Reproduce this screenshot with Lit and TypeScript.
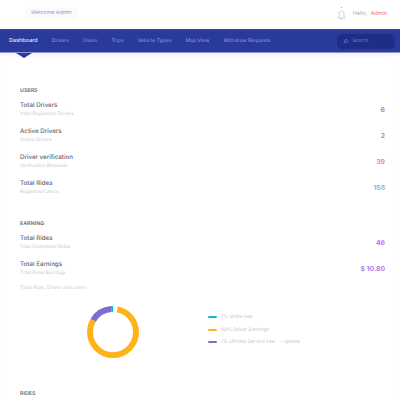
import { LitElement, html, css, svg } from "lit";
import { customElement } from "lit/decorators.js";

const users = [
  ["Total Drivers", "Valid Registered Drivers", "6", "purple"],
  ["Active Drivers", "Online Drivers", "2", "purple"],
  ["Driver verification", "Verification Requests", "39", "red"],
  ["Total Rides", "Registered Users", "155", "blue"],
];
const earning = [
  ["Total Rides", "Total Completed Rides", "46", "purple"],
  ["Total Earnings", "Total Rides Earnings", "$ 10.80", "purple"],
];
const nav = ["Drivers", "Users", "Trips", "Vehicle Types", "Map View", "Withdraw Requests"];
const legend = [
  ["1% Stripe Fee", "#12b5e5", ""],
  ["98% Driver Earnings", "#ffb31a", ""],
  ["1% Ufrides Service Fee", "#7a6fd0", "Update"],
];

@customElement("app-root")
export class AppRoot extends LitElement {
  static styles = css`
    :host { display: block; width: 400px; height: 400px; overflow: hidden; background: #fff; text-rendering: geometricPrecision;
      font-family: Inter, "Liberation Sans", sans-serif; color: #4a4a55; }
    .top { height: 29px; display: flex; align-items: flex-start; justify-content: space-between; box-sizing: border-box; padding: 7px 13px 0 25px; }
    .welcome { font-size: 5.3px; line-height: 7px; color: #9b9ba4; background: #fafaff; padding: 3px 6px; border-radius: 3px; }
    .hello { display: flex; align-items: center; gap: 7px; font-size: 5.4px; color: #a8a8b0; }
    .hello b { font-weight: 400; color: #ef6d80; margin-left: 2px; }
    .nav { height: 24px; background: #2a3a9b; border-top: 1px solid #3a49a8; border-bottom: 1px solid #8a92c8; box-sizing: border-box;
      display: flex; align-items: center; padding: 0 5px 0 9px; font-size: 5.15px; color: #8f9fe0; position: relative; box-shadow: 0 2px 4px #f0f0f6; }
    .nav span { margin-right: 14px; }
    .nav .active { color: #dfe4fa; font-weight: 500; font-size: 5.5px; position: relative; margin-right: 14px; }
    .nav .active::after { content: ""; position: absolute; left: 7px; top: 15px; border: 8px solid transparent; border-top: 5px solid #2a3a9b; border-bottom: 0; }
    .search { margin-left: auto; width: 58px; height: 15px; background: #1f2d86; border-radius: 5px; display: flex; align-items: center; gap: 4px; padding-left: 6px; box-sizing: border-box; color: #6f7cc4; font-size: 4.8px; }
    .content { margin: 4px 6px 0 6px; padding: 31px 9px 0 14px; background: #fff; box-shadow: 0 0 4px #fbfafe; height: 343px; box-sizing: border-box; }
    h3 { margin: 0 0 7px; font-size: 5.2px; line-height: 7px; font-weight: 600; color: #666670; letter-spacing: .1px; }
    .row { display: flex; justify-content: space-between; align-items: flex-start; height: 26px; }
    .name { font-size: 6.2px; line-height: 8px; font-weight: 500; color: #66666f; }
    .sub { font-size: 4.75px; line-height: 8px; color: #cacad0; }
    .val { font-size: 6.8px; font-weight: 700; line-height: 8px; margin-top: 3.5px; }
    .purple { color: #b47aec; } .red { color: #f0869b; } .blue { color: #7ab8f2; }
    .earn { margin-top: 15px; }
    .caption { font-size: 5.1px; line-height: 8px; color: #cccdd3; margin-top: -3px; }
    .chart { display: flex; align-items: flex-start; height: 99px; padding-left: 63px; padding-top: 10px; box-sizing: border-box; }
    .legend { margin-left: 65px; padding-top: 12px; display: flex; flex-direction: column; gap: 6.5px; font-size: 4.9px; color: #c6c6ce; }
    .legend div { display: flex; align-items: center; height: 6px; }
    .legend i { width: 9px; height: 2px; margin-right: 4px; border-radius: 1px; }
    .legend em { font-style: normal; margin-left: 5px; }
  `;

  private row(r: string[]) {
    return html`<div class="row"><div><div class="name">${r[0]}</div><div class="sub">${r[1]}</div></div><div class="val ${r[3]}">${r[2]}</div></div>`;
  }

  render() {
    const R = 23;
    const C = 2 * Math.PI * R;
    const seg = (c: string, start: number, pct: number) =>
      svg`<circle cx="30" cy="30" r=${R} fill="none" stroke=${c} stroke-width="6"
        stroke-dasharray="${(C * pct) / 100} ${C}" stroke-dashoffset=${(-C * start) / 100} transform="rotate(-90 30 30)"/>`;
    return html`
      <div class="top">
        <div class="welcome">Welcome Admin</div>
        <div class="hello">
          <svg width="9" height="14" viewBox="0 0 9 14" fill="none" stroke="#c4c0d2" stroke-width=".8">
            <path d="M4.500 4C2.700 4 2 5.400 2 7v2.500L1 11h7L7 9.500V7C7 5.400 6.300 4 4.500 4Z"/><path d="M3.500 11.500a1 1 0 0 0 2 0"/>
            <circle cx="4.500" cy="0.500" r=".5" fill="#e8637c" stroke="none"/>
          </svg>
          <span>Hello, <b>Admin</b></span>
        </div>
      </div>
      <div class="nav">
        <span class="active">Dashboard</span>
        ${nav.map((n) => html`<span>${n}</span>`)}
        <div class="search">
          <svg width="5" height="5" viewBox="0 0 5 5" fill="none" stroke="#7f8cd6" stroke-width=".6"><circle cx="3" cy="2" r="1.500"/><path d="M2 3.200L.7 4.500"/></svg>
          Search
        </div>
      </div>
      <div class="content">
        <h3>USERS</h3>
        ${users.map((r) => this.row(r))}
        <h3 class="earn">EARNING</h3>
        ${earning.map((r) => this.row(r))}
        <div class="caption">Total Ride, Driver and users</div>
        <div class="chart">
          <svg width="60" height="60" viewBox="0 0 60 60">
            ${seg("#ffb31a", 3, 80)}${seg("#7a6fd0", 83, 15)}${seg("#12b5e5", 98, 4)}
          </svg>
          <div class="legend">
            ${legend.map((l) => html`<div><i style="background:${l[1]}"></i>${l[0]}${l[2] ? html`<em>- ${l[2]}</em>` : ""}</div>`)}
          </div>
        </div>
        <h3>RIDES</h3>
      </div>
    `;
  }
}
